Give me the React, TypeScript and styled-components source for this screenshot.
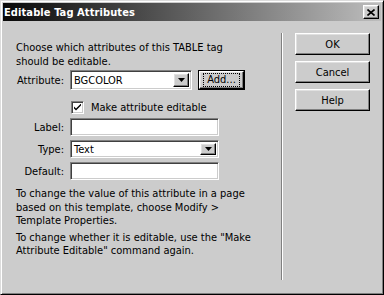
import React from 'react';
import styled, { createGlobalStyle, css } from 'styled-components';

const Global = createGlobalStyle`
  html, body { margin: 0; padding: 0; background: #cccccc; }
  body {
    width: 384px; height: 295px; overflow: hidden;
    font-family: "DejaVu Sans Condensed", "DejaVu Sans", sans-serif;
    font-stretch: condensed;
    font-size: 11px; color: #000;
  }
`;

const raised = css`
  background: #cccccc;
  border-top: 1px solid #ffffff;
  border-left: 1px solid #ffffff;
  border-right: 1px solid #000000;
  border-bottom: 1px solid #000000;
  box-shadow: inset -1px -1px #808080, inset 1px 1px #e0e0e0;
`;

const sunken = css`
  background: #ffffff;
  border-top: 1px solid #808080;
  border-left: 1px solid #808080;
  border-right: 1px solid #ffffff;
  border-bottom: 1px solid #ffffff;
  box-shadow: inset 1px 1px #404040, inset -1px -1px #cccccc;
`;

const Window = styled.div`
  box-sizing: border-box;
  width: 384px; height: 295px;
  background: #cccccc;
  border-top: 1px solid #dcdcdc;
  border-left: 1px solid #dcdcdc;
  border-right: 1px solid #000;
  border-bottom: 1px solid #000;
  box-shadow: inset 1px 1px #fff, inset -1px -1px #808080;
  padding: 2px;
  display: flex;
  flex-direction: column;
`;

const TitleBar = styled.div`
  height: 18px;
  flex: none;
  display: flex;
  align-items: center;
  padding-left: 1px;
  background: linear-gradient(to right, #080808, #bdbdbd);
`;

const Title = styled.span`
  color: #fff;
  font-weight: bold;
  font-size: 11px;
  letter-spacing: 0.1px;
`;

const CloseButton = styled.div`
  ${raised};
  box-sizing: border-box;
  width: 16px; height: 14px;
  margin-left: auto;
  margin-right: 2px;
  display: flex;
  align-items: center;
  justify-content: center;
`;

const Body = styled.div`
  flex: 1;
  display: flex;
`;

const LeftPane = styled.div`
  box-sizing: border-box;
  width: 278px;
  padding: 20px 0 0 13px;
  display: flex;
  flex-direction: column;
`;

const Text = styled.p`
  margin: 0;
  line-height: 14px;
`;

const Form = styled.div`
  display: grid;
  grid-template-columns: 54px 1fr;
  align-items: center;
  margin-top: 1px;
`;

const Label = styled.div<{ $gap?: number }>`
  text-align: right;
  padding-right: 6px;
  margin-top: ${p => p.$gap ?? 0}px;
`;

const Field = styled.div<{ $gap?: number }>`
  display: flex;
  align-items: center;
  margin-top: ${p => p.$gap ?? 0}px;
`;

const Select = styled.div<{ $w: number }>`
  ${sunken};
  box-sizing: border-box;
  width: ${p => p.$w}px;
  height: ${p => (p.$w > 130 ? 18 : 20)}px;
  display: flex;
  align-items: center;
  padding: 0 2px 0 3px;
`;

const SelectValue = styled.span`
  flex: 1;
`;

const Arrow = styled.div`
  ${raised};
  box-sizing: border-box;
  width: 16px;
  height: calc(100% - 4px);
  display: flex;
  align-items: center;
  justify-content: center;
`;

const Input = styled.div`
  ${sunken};
  box-sizing: border-box;
  width: 149px;
  height: 18px;
`;

const DefaultButton = styled.div`
  box-sizing: border-box;
  margin-left: 6px;
  width: 47px;
  height: 20px;
  border: 1px solid #000;
  display: flex;
`;

const ButtonFace = styled.div`
  ${raised};
  flex: 1;
  display: flex;
  align-items: center;
  justify-content: center;
`;

const Focus = styled.span`
  border: 1px dotted #000;
  padding: 0 3px;
  line-height: 12px;
`;

const CheckRow = styled.div`
  grid-column: 2;
  display: flex;
  align-items: center;
  margin-top: 11px;
  padding-left: 1px;
`;

const CheckBox = styled.div`
  ${sunken};
  box-sizing: border-box;
  width: 13px; height: 13px;
  display: flex;
  align-items: center;
  justify-content: center;
  margin-right: 7px;
`;

const Notes = styled.div`
  margin-top: 7px;
  line-height: 13.5px;
`;

const Note = styled.p<{ $gap?: number }>`
  margin: ${p => p.$gap ?? 0}px 0 0 0;
`;

const Separator = styled.div`
  width: 0;
  border-left: 1px solid #808080;
  border-right: 1px solid #ffffff;
  margin: 12px 0 12px 0;
`;

const RightPane = styled.div`
  padding: 12px 0 0 12px;
  display: flex;
  flex-direction: column;
  gap: 6px;
`;

const Button = styled.div`
  ${raised};
  box-sizing: border-box;
  width: 75px;
  height: 22px;
  display: flex;
  align-items: center;
  justify-content: center;
`;

const DownTriangle = () => (
  <svg width="7" height="4" viewBox="0 0 7 4">
    <path d="M0 0h7L3.5 4z" fill="#000" />
  </svg>
);

const CloseGlyph = () => (
  <svg width="8" height="7" viewBox="0 0 8 7">
    <path d="M0.5 0.5L7.5 6.5M7.5 0.5L0.5 6.5" stroke="#000" strokeWidth="1.6" fill="none" />
  </svg>
);

const CheckGlyph = () => (
  <svg width="7" height="7" viewBox="0 0 7 7">
    <path d="M0 2.5v2l2 2l5-5v-2l-5 5z" fill="#000" />
  </svg>
);

export default function App() {
  return (
    <>
      <Global />
      <Window>
        <TitleBar>
          <Title>Editable Tag Attributes</Title>
          <CloseButton><CloseGlyph /></CloseButton>
        </TitleBar>
        <Body>
          <LeftPane>
            <Text>Choose which attributes of this TABLE tag<br />should be editable.</Text>
            <Form>
              <Label>Attribute:</Label>
              <Field>
                <Select $w={122}>
                  <SelectValue>BGCOLOR</SelectValue>
                  <Arrow><DownTriangle /></Arrow>
                </Select>
                <DefaultButton>
                  <ButtonFace><Focus>Add...</Focus></ButtonFace>
                </DefaultButton>
              </Field>
              <CheckRow>
                <CheckBox><CheckGlyph /></CheckBox>
                <span>Make attribute editable</span>
              </CheckRow>
              <Label $gap={4}>Label:</Label>
              <Field $gap={4}><Input /></Field>
              <Label $gap={4}>Type:</Label>
              <Field $gap={4}>
                <Select $w={149}>
                  <SelectValue>Text</SelectValue>
                  <Arrow><DownTriangle /></Arrow>
                </Select>
              </Field>
              <Label $gap={4}>Default:</Label>
              <Field $gap={4}><Input /></Field>
            </Form>
            <Notes>
              <Note>To change the value of this attribute in a page<br />based on this template, choose Modify &gt;<br />Template Properties.</Note>
              <Note $gap={3}>To change whether it is editable, use the "Make<br />Attribute Editable" command again.</Note>
            </Notes>
          </LeftPane>
          <Separator />
          <RightPane>
            <Button>OK</Button>
            <Button>Cancel</Button>
            <Button>Help</Button>
          </RightPane>
        </Body>
      </Window>
    </>
  );
}
